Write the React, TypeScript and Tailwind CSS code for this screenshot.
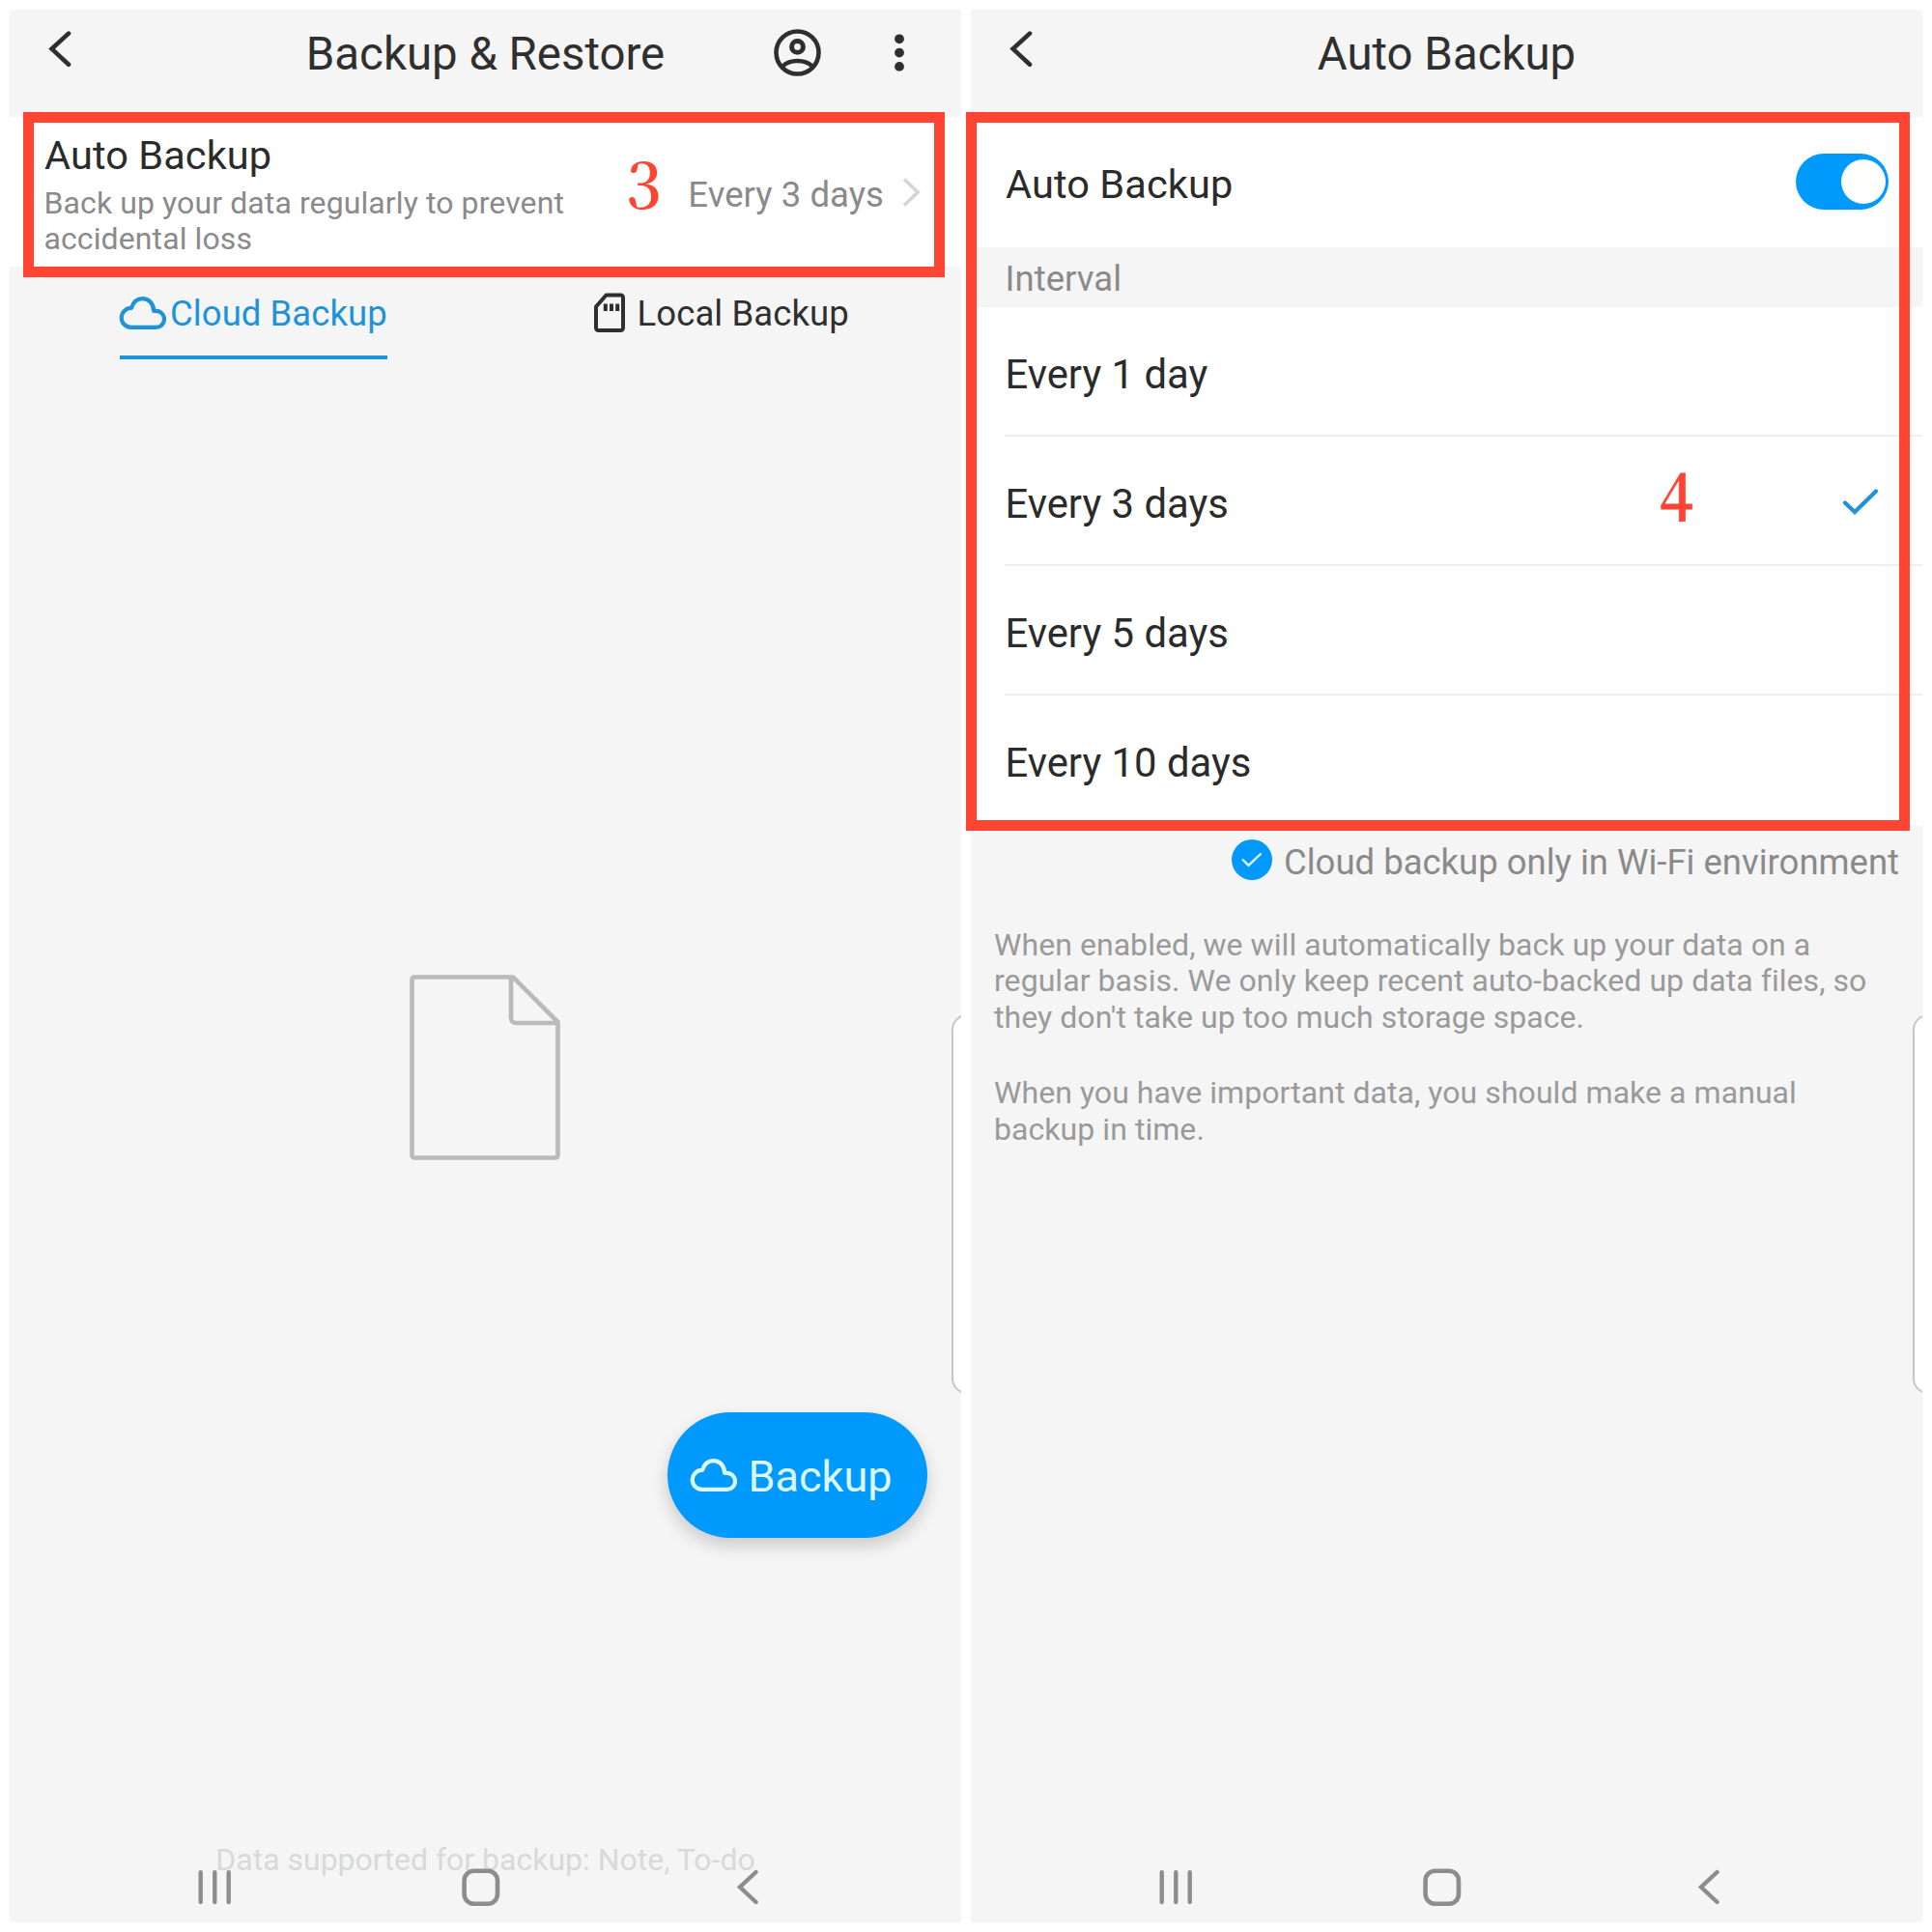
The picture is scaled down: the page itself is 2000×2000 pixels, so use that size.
import React from "react";

type IconProps = { className?: string };

function BackIcon() {
  return (
    <svg width="24" height="38" viewBox="0 0 24 38" fill="none" stroke="#2f2f2f" strokeWidth="4.6" strokeLinecap="round" strokeLinejoin="miter">
      <path d="M21 2.6 3.6 18.6 21 34.8" />
    </svg>
  );
}

function AccountIcon() {
  return (
    <svg width="49" height="49" viewBox="0 0 49 49" fill="none" stroke="#2f2f2f">
      <circle cx="24.5" cy="24.5" r="22" strokeWidth="4.6" />
      <circle cx="24.5" cy="18.4" r="5.9" strokeWidth="5" />
      <path d="M9 38.6C17 31.2 32 31.2 40 38.6" strokeWidth="4.4" />
    </svg>
  );
}

function MoreIcon() {
  return (
    <svg width="10" height="40" viewBox="0 0 10 40" fill="#2f2f2f">
      <circle cx="5" cy="5.3" r="4.9" />
      <circle cx="5" cy="19.6" r="4.9" />
      <circle cx="5" cy="33.9" r="4.9" />
    </svg>
  );
}

function CloudIcon({ className }: IconProps) {
  return (
    <svg className={className} width="49" height="34" viewBox="0 0 49 34" fill="none" stroke="currentColor" strokeWidth="4.2" strokeLinejoin="round">
      <path d="M12.5 31.900a10 10 0 0 1 .5-20C15 5.500 19 2.100 24.500 2.100 31 2.100 35.800 7 36.200 14.900h2.300a8.500 8.500 0 0 1 0 17Z" />
    </svg>
  );
}

function SdCardIcon() {
  return (
    <svg width="34" height="42" viewBox="0 0 34 42" fill="none">
      <path d="M13.500 2.500H28.500a2.500 2.500 0 0 1 2.500 2.500V36.500a2.500 2.500 0 0 1-2.500 2.500H5.500A2.500 2.500 0 0 1 3 36.500V14.500Z" stroke="#2f2f2f" strokeWidth="4" strokeLinejoin="round" />
      <path d="M12.800 11.500v7.500M19 11.500v7.500M25.200 11.500v7.500" stroke="#2f2f2f" strokeWidth="4" />
    </svg>
  );
}

function DocumentIcon() {
  return (
    <svg className="-ml-px" width="156" height="192" viewBox="0 0 156 192" fill="none" stroke="#bababa" strokeWidth="4.600" strokeLinejoin="round">
      <path d="M5 2.500H107L153.500 49V187a2.500 2.500 0 0 1-2.500 2.500H5A2.500 2.500 0 0 1 2.500 187V5A2.500 2.500 0 0 1 5 2.500Z" />
      <path d="M105 2.500V45a5 5 0 0 0 5 5H153.500" />
    </svg>
  );
}

function SystemNav() {
  return (
    <nav className="absolute inset-x-0 bottom-0 flex h-[73px] items-center pl-[194px]">
      <svg width="36" height="38" viewBox="0 0 36 38" stroke="#8d8d8d" strokeWidth="4.400" strokeLinecap="round">
        <path d="M3.700 3.200V34M18.300 3.200V34M32.700 3.200V34" />
      </svg>
      <svg className="ml-[238px]" width="40" height="40" viewBox="0 0 40 40" fill="none" stroke="#8d8d8d" strokeWidth="4.600">
        <rect x="2.600" y="2.800" width="34.400" height="34" rx="10" />
      </svg>
      <svg className="ml-[244px]" width="24" height="38" viewBox="0 0 24 38" fill="none" stroke="#8d8d8d" strokeWidth="4.400" strokeLinecap="round">
        <path d="M20.500 3 4 18.500 20.500 34" />
      </svg>
    </nav>
  );
}

function EdgeHandle() {
  return (
    <div className="absolute right-0 top-[1040px] h-[393px] w-[10px] overflow-hidden">
      <div className="h-full w-[60px] rounded-[16px] border-2 border-[#c6c6c6] bg-white" />
    </div>
  );
}

function Header({ title, actions }: { title: string; actions?: React.ReactNode }) {
  return (
    <header className="grid h-[111px] grid-cols-[200px_1fr_200px] items-start">
      <div className="pl-[40px] pt-[22px]">
        <BackIcon />
      </div>
      <h1 className="whitespace-nowrap text-center text-[47.4px] leading-[93px] text-[#2f2f2f]">{title}</h1>
      {actions}
    </header>
  );
}

function BackupRestoreScreen() {
  return (
    <section className="relative flex w-[985px] flex-col bg-[#f5f5f5]">
      <Header
        title="Backup & Restore"
        actions={
          <div className="flex items-center pl-[6px] pt-5">
            <AccountIcon />
            <div className="ml-[76px]">
              <MoreIcon />
            </div>
          </div>
        }
      />

      <div className="flex h-[155px] items-start justify-between bg-white pl-[36px] pr-[42px]">
        <div className="w-[580px] pt-4">
          <div className="text-[41.5px] leading-[48px] tracking-[0.08px] text-[#2b2b2b]">Auto Backup</div>
          <p className="-ml-[0.5px] mt-[7px] text-[32px] leading-[37px] tracking-[0.1px] text-[#8a8a8a]">
            Back up your data regularly to prevent accidental loss
          </p>
        </div>
        <div className="flex h-full items-center">
          <span className="mt-[6px] text-[36.5px] leading-[42px] tracking-[0.06px] text-[#8a8a8a]">Every 3 days</span>
          <svg className="ml-[19px]" width="19" height="32" viewBox="0 0 19 32" fill="none" stroke="#d6d6d6" strokeWidth="3.800">
            <path d="M2 2.500 16 16 2 29.500" />
          </svg>
        </div>
      </div>

      <div className="flex h-24 pl-[114px]">
        <div className="flex w-[277px] items-center whitespace-nowrap border-b-4 border-[#1f93d7] pt-1 text-[36.5px] leading-[42px] tracking-[0.06px] text-[#1f93d7]">
          <CloudIcon className="-ml-[1.5px] shrink-0" />
          <span className="ml-[4.5px] mt-px">Cloud Backup</span>
        </div>
        <div className="ml-[212.5px] flex items-center whitespace-nowrap text-[36.5px] leading-[42px] tracking-[0.1px] text-[#2f2f2f]">
          <SdCardIcon />
          <span className="ml-3 mt-px">Local Backup</span>
        </div>
      </div>

      <div className="mt-[637px] flex justify-center">
        <DocumentIcon />
      </div>

      <button className="mr-[35px] mt-[261px] flex h-[130px] w-[269px] items-center self-end rounded-full bg-[#009aff] pl-[22.5px] text-[#dcf8ff] shadow-[0_8px_18px_rgba(0,0,0,0.18)]">
        <CloudIcon />
        <span className="ml-3 mt-[4px] text-[45px] leading-[54px]">Backup</span>
      </button>

      <p className="mt-[315px] text-center text-[32px] leading-[37px] text-[#d9d9d9]">
        Data supported for backup: Note, To-do
      </p>

      <EdgeHandle />
      <SystemNav />

      <div className="absolute left-[14px] top-[106px] h-[171px] w-[954px] border-[11px] border-[#ff4433]" />
      <span className="absolute left-[638px] top-[128px] origin-left scale-x-[0.96] font-['Noto_Serif_CJK_SC','Noto_Serif',serif] text-[67px] font-semibold leading-[98px] text-[#ff4433]">
        3
      </span>
    </section>
  );
}

const intervals = [
  { label: "Every 1 day", selected: false },
  { label: "Every 3 days", selected: true },
  { label: "Every 5 days", selected: false },
  { label: "Every 10 days", selected: false },
];

function AutoBackupScreen() {
  return (
    <section className="relative flex w-[985px] flex-col bg-[#f5f5f5]">
      <Header title="Auto Backup" />

      <div className="flex h-[135px] items-center justify-between bg-white pl-[36px] pr-[35px]">
        <span className="mt-[4px] text-[41.5px] leading-[48px] tracking-[0.1px] text-[#2b2b2b]">Auto Backup</span>
        <div className="mb-px flex h-[58px] w-[96px] items-center justify-end rounded-full bg-[#009aff] pr-[3px]">
          <div className="size-[46px] rounded-full bg-white" />
        </div>
      </div>

      <div className="flex h-[61.5px] items-center pl-[35.5px] pt-1 text-[36.5px] leading-[42px] tracking-[0.06px] text-[#8a8a8a]">Interval</div>

      <ul className="bg-white pl-[35px]">
        {intervals.map(({ label, selected }) => (
          <li
            key={label}
            className="flex h-[134.25px] items-center justify-between border-b-2 border-[#efefef] pr-[45px] text-[41.8px] leading-[48px] text-[#2b2b2b] last:border-transparent"
          >
            <span className="ml-[0.5px] mt-[8px]">{label}</span>
            {selected && (
              <svg className="mt-[3px]" width="38" height="28" viewBox="0 0 38 28" fill="none" stroke="#1f93d7" strokeWidth="4.200" strokeLinecap="round">
                <path d="M3 15.500 13 25 35 3.500" />
              </svg>
            )}
          </li>
        ))}
      </ul>

      <div className="flex items-center justify-end pr-6 pt-[14px]">
        <div className="flex size-[42px] items-center justify-center rounded-full bg-[#009aff]">
          <svg width="24" height="18" viewBox="0 0 24 18" fill="none" stroke="#e4f9ff" strokeWidth="2.400">
            <path d="M2 8.500 8.500 14.800 21.500 2.500" />
          </svg>
        </div>
        <span className="ml-3 mt-[6px] text-[36.5px] leading-[36px] text-[#8a8a8a]">Cloud backup only in Wi-Fi environment</span>
      </div>

      <div className="ml-6 mt-[49.5px] flex w-[920px] flex-col gap-[41px] text-[32px] leading-[37.4px] tracking-[0.06px] text-[#9a9a9a]">
        <p>
          When enabled, we will automatically back up your data on a regular basis. We only keep recent auto-backed up data files, so
          they don't take up too much storage space.
        </p>
        <p>When you have important data, you should make a manual backup in time.</p>
      </div>

      <EdgeHandle />
      <SystemNav />

      <div className="absolute left-[-5px] top-[106px] h-[744px] w-[977px] border-[11px] border-[#ff4433]" />
      <span className="absolute left-[713px] top-[451px] origin-left scale-x-[0.91] font-['Noto_Serif_CJK_SC','Noto_Serif',serif] text-[67px] font-semibold leading-[98px] text-[#ff4433] [-webkit-text-stroke:0.8px_#ff4433]">
        4
      </span>
    </section>
  );
}

export default function App() {
  return (
    <main className="flex h-[2000px] w-[2000px] gap-[10px] bg-white p-[10px] font-[Roboto,sans-serif]">
      <BackupRestoreScreen />
      <AutoBackupScreen />
    </main>
  );
}
